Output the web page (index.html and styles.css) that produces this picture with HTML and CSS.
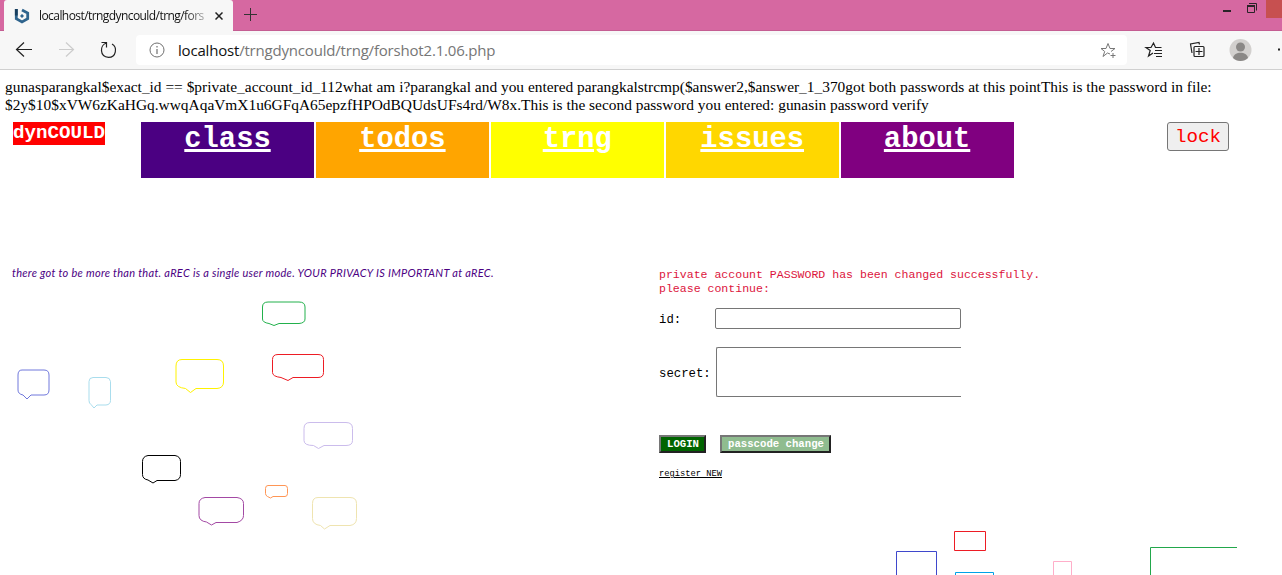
FILE: index.html
```html
<!DOCTYPE html>
<html lang="en">
<head>
<meta charset="utf-8">
<title>dynCOULD</title>
<link rel="stylesheet" href="styles.css">
</head>
<body>
<header class="tabbar">
  <div class="tab">
    <svg class="favicon" width="16" height="16" viewBox="0 0 16 16" fill="none" stroke="#2f648d" stroke-width="2.8"><path d="M2.300 1v9.800L8 14l5.700-3.200V5L8 2"/><circle cx="8" cy="8" r="1.200" fill="#2f648d" stroke-width="1"/><path d="M2.300 7.500V1" stroke="#183e5d"/></svg>
    <span class="tab-title">localhost/trngdyncould/trng/fors</span>
    <svg class="tab-close" width="8" height="8" viewBox="0 0 8 8" stroke="#222" stroke-width="1.500"><path d="M.5.5l7 7M7.500.5l-7 7"/></svg>
  </div>
  <svg class="plus" width="13" height="13" viewBox="0 0 13 13" stroke="#333"><path d="M0 6.500h13M6.500 0v13"/></svg>
  <div class="window-buttons">
    <svg width="35" height="18" viewBox="0 0 35 18" fill="none" stroke="#2a2328"><path d="M0 11h8" stroke-width="2"/><path d="M26 3.500h7.500v7" /><path d="M24.500 6h7v6.500h-7z"/><path d="M24 6h8" stroke-width="2"/></svg>
    <span class="window-close"></span>
  </div>
</header>
<div class="toolbar">
  <svg class="nav" width="136" height="38" viewBox="0 0 136 38" fill="none" stroke="#222" stroke-width="1.200"><path d="M32 18.500H17m7-7-7.500 7 7.500 7"/><path d="M59 18.500h14m-7-7 7.500 7-7.500 7" stroke="#ccc"/><path d="M101.500 11.500h5v5M106.500 12c-7 2-7 14 2 14.300 8 0 9-10.300 3.500-13.300"/></svg>
  <div class="address">
    <svg width="16" height="16" viewBox="0 0 16 16" fill="none" stroke="#707070"><circle cx="8" cy="8" r="7"/><path d="M8 7v5M8 4v1.500" stroke-width="1.200"/></svg>
    <span class="url"><b>localhost</b>/trngdyncould/trng/forshot2.1.06.php</span>
    <svg class="star" width="17" height="17" viewBox="0 0 17 17" fill="none" stroke="#777"><path d="M11 12 8.500 11 4 14.500l1.700-5L2 6.500h5L9 1.500l2 5h5L12 9.500M11.500 13.500h5M14 11v5"/></svg>
  </div>
  <svg class="tools" width="154" height="38" viewBox="0 0 154 38" fill="none" stroke="#222" stroke-width="1.200"><path d="m25 22-4.500 3 1.700-5.500L18 16.500h5l2.500-4.500 2 4.500h6M27 19.500h7M26 22.500h8M28 25.500h6"/><path d="m64 22-1.500-9 8.500-1.500.5 2M67 15.500h8a1 1 0 0 1 1 1v8a1 1 0 0 1-1 1h-8a1 1 0 0 1-1-1v-8a1 1 0 0 1 1-1zM71 17v7M67.500 20.500h7"/><circle cx="112.500" cy="19" r="11" fill="#d2d0ce" stroke="none"/><circle cx="112.500" cy="16" r="4.500" fill="#8a8886" stroke="none"/><path d="M105 27c1-7 14-7 15 0-4 4-11 4-15 0" fill="#8a8886" stroke="none"/><path d="M150 18.500h2" stroke-width="2"/></svg>
</div>
<main>
  <p class="debug">gunasparangkal$exact_id == $private_account_id_112what am i?parangkal and you entered parangkalstrcmp($answer2,$answer_1_370got both passwords at this pointThis is the password in file:<br>$2y$10$xVW6zKaHGq.wwqAqaVmX1u6GFqA65epzfHPOdBQUdsUFs4rd/W8x.This is the second password you entered: gunasin password verify</p>
  <nav class="menu">
    <span class="brand">dynCOULD</span>
    <div class="links">
      <a class="class">class</a><a class="todos">todos</a><a class="trng">trng</a><a class="issues">issues</a><a class="about">about</a>
    </div>
    <button class="lock">lock</button>
  </nav>
  <div class="columns">
    <section class="left">
      <p class="privacy">there got to be more than that. aREC is a single user mode. YOUR PRIVACY IS IMPORTANT at aREC.</p>
      <svg class="bubbles" width="400" height="250" viewBox="0 290 400 250" fill="none" stroke-width="1">
        <path stroke="#22b14c" d="M268 302h31q6 0 6 5v12q0 4-6 4.500h-20l-5 2-5-2q-6.500-1-6.500-4.500v-12q0-5 5.500-5z"/>
        <path stroke="#ed1c24" d="M278 354.500h40q5.500 0 5.500 5v13q0 5-5.500 5h-25l-5 3-7-3q-8.500-1-8.500-5v-13q0-5 5.500-5z"/>
        <path stroke="#fff200" d="M182 359.500h35q6.500 0 6.500 6.500v16q0 6-6.500 6.500h-21l-5.500 4-5-4q-9.500-1-9.500-6.500v-16q0-6.500 6-6.500z"/>
        <path stroke="#7078dc" d="M22 370h22q5 0 5 5v15q0 5-5 5H31l-4 4-4-4q-5-1-5-5v-15q0-5 4-5z"/>
        <path stroke="#a9dded" d="M93 377.500h13q4 0 4.500 4v19q0 4-4.500 4.500h-9l-3 3-3-3.500q-2-1-2-4v-19q0-4 4-4z"/>
        <path stroke="#cbbcec" d="M310 422.500h36q6.500 0 6.500 6v12q0 5-6.500 5h-22l-5.500 3-5-3q-9.500 0-9.500-5v-12q0-6 6-6z"/>
        <path stroke="#000" d="M148 455.500h27q5.500 1 5.500 6v13q0 5-5.500 6h-18l-4 2.500-5-3q-5.500-1-5.500-5.500v-13q0-5 5.500-6z"/>
        <path stroke="#a349a4" d="M205 497.500h32q6.500 1 6.500 6v12q0 5-6.500 7h-21l-4.500 2.500-5-3q-7.500-1-7.500-6.500v-12q0-5 6-6z"/>
        <path stroke="#ff9655" d="M268 485.500h17q2.500 0 2.500 3v5q0 3-2.500 3h-12l-2.500 1.500-3-1.500q-2-1-2-3v-5q0-3 2.500-3z"/>
        <path stroke="#efe4b0" d="M318 497.500h32q6.500 0 6.500 6v15q0 6-6.500 7h-20l-5.500 3.500-4-3.500q-8-1-8-7v-15q0-6 5.500-6z"/>
      </svg>
    </section>
    <section class="right">
      <p class="notice">private account PASSWORD has been changed successfully.<br>please continue:</p>
      <div class="row id-row"><label>id:</label><div class="field id-field"></div></div>
      <div class="row secret-row"><label>secret:</label><div class="field secret-field"></div></div>
      <div class="actions"><button class="login">LOGIN</button><button class="change">passcode change</button></div>
      <a class="register">register NEW</a>
      <svg class="boxes" width="345" height="45" viewBox="893 530 345 45" fill="none"><path stroke="#3f48cc" d="M896.500 576v-24.500h40V576"/><path stroke="#ed1c24" d="M954.500 531.500h31v19h-31z"/><path stroke="#00a2e8" d="M955.500 576v-3.500h38v3.500"/><path stroke="#ffaec9" d="M1053.500 576v-14.500h18V576"/><path stroke="#22a74b" d="M1150.500 576v-28.500H1237"/></svg>
    </section>
  </div>
</main>
</body>
</html>
```

FILE: styles.css
```css
* { box-sizing: border-box; }
body { margin: 0; width: 1282px; height: 575px; overflow: hidden; background: #fff; }
svg { display: block; flex: none; }
p { margin: 0; }
.tabbar { display: flex; height: 31px; background: #d668a1; border-bottom: 1px solid #c45d92; }
.tab { display: flex; align-items: center; width: 229px; height: 31px; margin-left: 4px; padding-left: 10px; border-radius: 3px 3px 0 0; background: #f7f7f7; }
.tab-title { width: 168px; margin-left: 9px; white-space: nowrap; font: 12px/18px "Open Sans", sans-serif; letter-spacing: -0.57px; color: #111; -webkit-mask-image: linear-gradient(90deg, #000 145px, transparent 175px); mask-image: linear-gradient(90deg, #000 145px, transparent 175px); }
.tab-close { margin-left: 8px; }
.plus { margin: 8px 0 0 11px; }
.window-buttons { display: flex; margin-left: auto; gap: 8px; }
.window-close { width: 16px; height: 18px; background: #c75050; }
.toolbar { display: flex; height: 39px; background: #f7f7f7; border-bottom: 1px solid #d0d0d0; }
.address { display: flex; align-items: center; width: 991px; height: 30px; margin-top: 4px; padding: 0 11px 0 13px; border-radius: 4px; background: #fff; }
.url { margin-left: 13px; font: 15px/20px "Open Sans", sans-serif; letter-spacing: -0.19px; white-space: nowrap; color: #767676; }
.url b { font-weight: 400; color: #111; }
.star { margin-left: auto; }
.tools { margin-left: 1px; }
.debug { height: 52px; padding: 8px 0 0 5px; font: 15.41px/18px "Liberation Serif", serif; white-space: nowrap; color: #000; }
.menu { display: flex; height: 56px; font-family: "Liberation Mono", monospace; }
.brand { width: 92px; height: 23px; margin-left: 13px; background: red; color: #fff; font-size: 19.2px; font-weight: 700; line-height: 23px; }
.links { display: grid; grid-template-columns: repeat(5, 173px); gap: 1.900px; margin-left: 36px; }
.links a { color: #fff; font-size: 28.8px; font-weight: 700; line-height: 35px; text-align: center; text-decoration: underline; text-decoration-thickness: 3px; text-underline-offset: 2px; }
.class { background: indigo; }
.todos { background: orange; }
.trng { background: yellow; }
.issues { background: gold; }
.about { background: purple; }
.lock { width: 62px; height: 29px; margin-left: 153px; padding: 0 0 0 1px; border: 1px solid #767676; border-radius: 3px; background: #efefef; color: red; font: 19.2px/26px "Liberation Mono", monospace; }
.columns { display: grid; grid-template-columns: 659px 1fr; padding-top: 87px; }
.privacy { height: 25px; padding-left: 12px; font: italic 11px/16px "Lato", cursive; letter-spacing: 0.29px; white-space: nowrap; color: indigo; }
.right { font-family: "Liberation Mono", monospace; }
.notice { padding-top: 3px; font-size: 11.55px; line-height: 14px; color: crimson; white-space: nowrap; }
.row { display: flex; align-items: center; font-size: 12.3px; }
.row label { width: 56px; padding-top: 2px; }
.field { border: 1px solid #767676; border-radius: 2px; }
.id-row { margin-top: 12px; }
.id-field { width: 246px; height: 21px; }
.secret-row { margin-top: 18px; }
.secret-row label { width: 57px; padding-top: 4px; }
.secret-field { width: 245px; height: 50px; border-right: 0; border-radius: 2px 0 0 2px; }
.actions { display: flex; gap: 14px; margin-top: 38px; }
.actions button { height: 18px; padding: 1px 0 0 1px; border: 2px solid; border-color: #767676 #222 #222 #767676; color: #fff; font: 700 10.66px/13px "Liberation Mono", monospace; white-space: nowrap; }
.actions .login { width: 47px; background: #006400; }
.actions .change { width: 111px; background: #8fbc8f; }
.register { display: block; margin-top: 15px; font-size: 8.75px; line-height: 12px; color: #000; text-decoration: underline; }
.boxes { margin: 50px 0 0 234px; }
```
